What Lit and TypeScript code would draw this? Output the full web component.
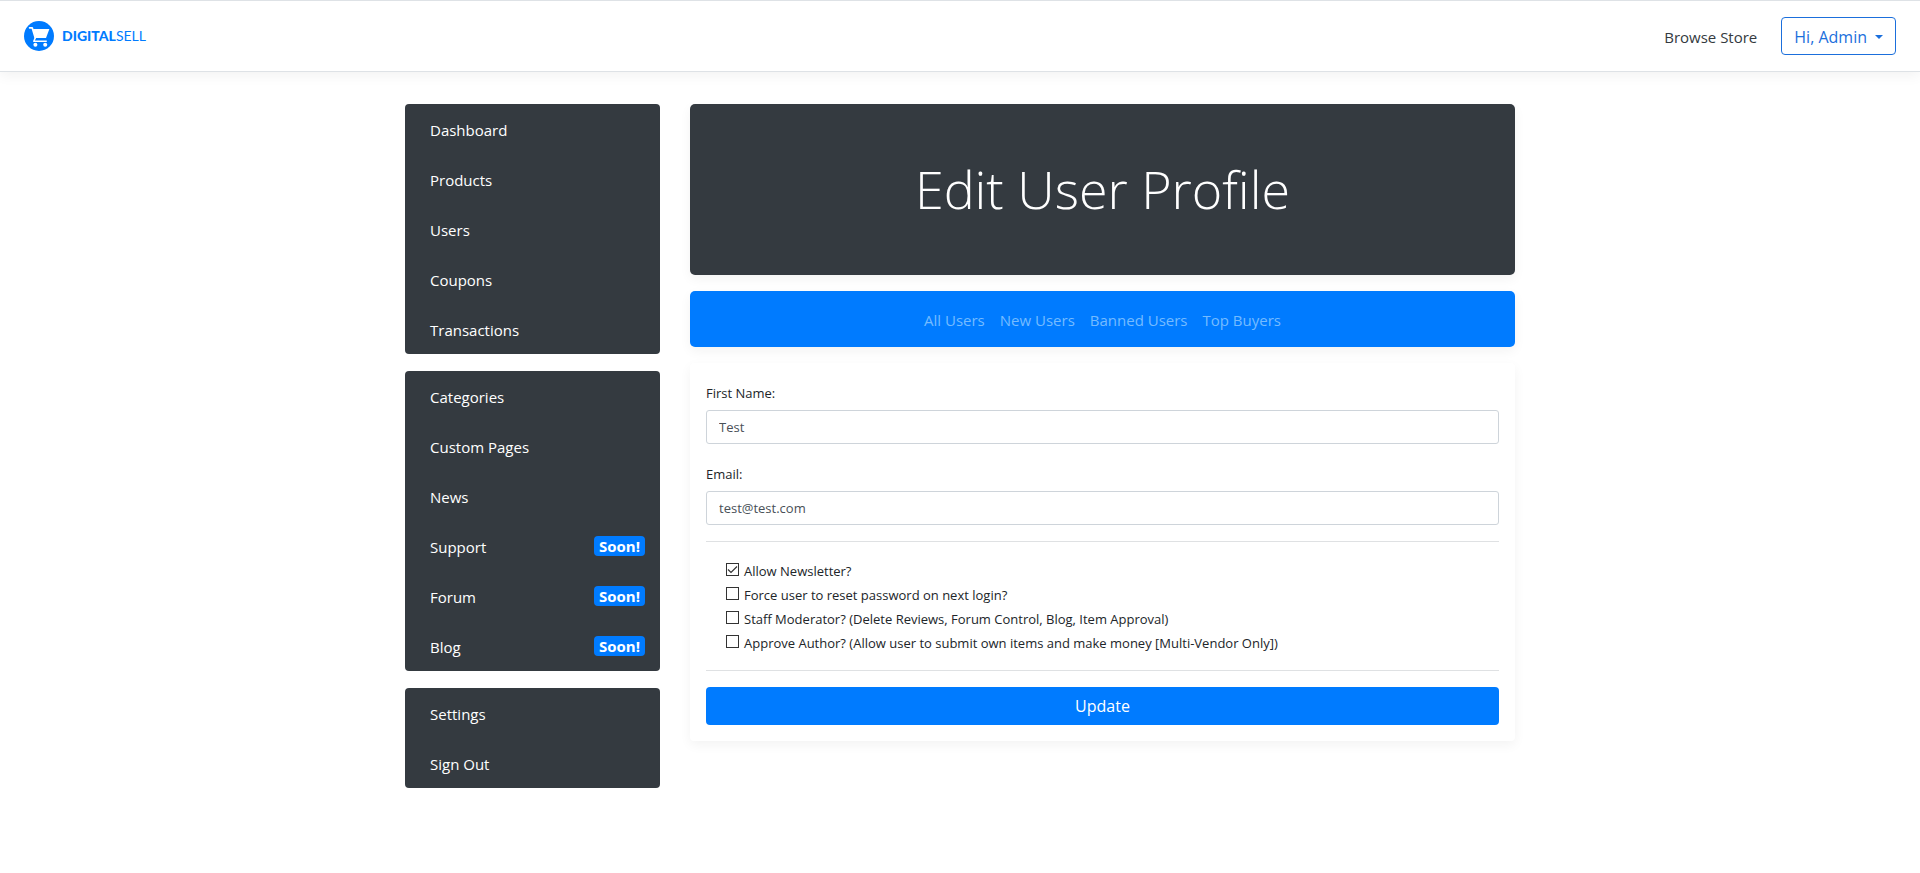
import { LitElement, html, css, nothing } from "lit";
import { customElement, property } from "lit/decorators.js";

interface MenuItem {
  label: string;
  soon?: boolean;
}

const MENU: MenuItem[][] = [
  [
    { label: "Dashboard" },
    { label: "Products" },
    { label: "Users" },
    { label: "Coupons" },
    { label: "Transactions" },
  ],
  [
    { label: "Categories" },
    { label: "Custom Pages" },
    { label: "News" },
    { label: "Support", soon: true },
    { label: "Forum", soon: true },
    { label: "Blog", soon: true },
  ],
  [{ label: "Settings" }, { label: "Sign Out" }],
];

const TABS = ["All Users", "New Users", "Banned Users", "Top Buyers"];

const OPTIONS = [
  { id: "newsletter", label: "Allow Newsletter?", checked: true },
  { id: "reset", label: "Force user to reset password on next login?", checked: false },
  {
    id: "staff",
    label: "Staff Moderator? (Delete Reviews, Forum Control, Blog, Item Approval)",
    checked: false,
  },
  {
    id: "author",
    label: "Approve Author? (Allow user to submit own items and make money [Multi-Vendor Only])",
    checked: false,
  },
];

@customElement("site-header")
class SiteHeader extends LitElement {
  static styles = css`
    :host {
      display: block;
    }
    .bar {
      display: flex;
      align-items: center;
      justify-content: space-between;
      box-sizing: border-box;
      padding: 16px 24px;
      background: #fff;
      border-top: 1px solid #dee2e6;
      border-bottom: 1px solid #dee2e6;
      box-shadow: 0 4px 12px rgba(0, 0, 0, 0.05);
    }
    .brand {
      display: flex;
      align-items: center;
      gap: 8px;
      color: #007bff;
      font: 400 14px/30px Lato, sans-serif;
      text-decoration: none;
    }
    .brand b {
      font-weight: 900;
    }
    .icon {
      display: block;
      width: 30px;
      height: 30px;
    }
    .actions {
      display: flex;
      align-items: center;
      gap: 24px;
    }
    .store {
      padding-top: 2px;
      color: #343a40;
      font-size: 15px;
      line-height: 24px;
      text-decoration: none;
    }
    .account {
      display: flex;
      align-items: center;
      gap: 8px;
      padding: 7px 12px 5px;
      color: #1b6fdc;
      background: #fff;
      border: 1px solid #1b6fdc;
      border-radius: 4px;
      font: 400 16px/24px "Open Sans", sans-serif;
    }
    .caret {
      border: 4px solid transparent;
      border-top-color: currentColor;
      border-bottom: 0;
    }
  `;

  render() {
    return html`
      <header class="bar">
        <a class="brand" href="#">
          <svg class="icon" viewBox="0 0 30 30" aria-hidden="true">
            <circle cx="15" cy="15" r="15" fill="#007bff" />
            <path
              d="M5.6 6.8h2.6l3 10"
              fill="none"
              stroke="#fff"
              stroke-width="1.7"
              stroke-linecap="round"
              stroke-linejoin="round"
            />
            <path d="M9 8h16.4L22 17H11.4z" fill="#fff" />
            <path
              d="M11.4 16.6l-1.6 3.6h13"
              fill="none"
              stroke="#fff"
              stroke-width="1.5"
              stroke-linejoin="round"
            />
            <circle cx="11.4" cy="23.8" r="2" fill="#fff" />
            <circle cx="21.2" cy="23.8" r="2" fill="#fff" />
          </svg>
          <span><b>DIGITAL</b>SELL</span>
        </a>
        <nav class="actions">
          <a class="store" href="#">Browse Store</a>
          <button class="account" type="button">Hi, Admin<span class="caret"></span></button>
        </nav>
      </header>
    `;
  }
}

@customElement("side-menu")
class SideMenu extends LitElement {
  @property({ attribute: false }) groups: MenuItem[][] = [];

  static styles = css`
    :host {
      display: block;
    }
    .menu {
      display: flex;
      flex-direction: column;
      gap: 17px;
    }
    .group {
      margin: 0;
      padding: 0;
      list-style: none;
      background: #343a40;
      border-radius: 4px;
    }
    .link {
      display: flex;
      align-items: center;
      justify-content: space-between;
      padding: 14px 15px 12px 25px;
      color: #fff;
      font-size: 15px;
      line-height: 24px;
      text-decoration: none;
    }
    .badge {
      margin: -2px 0 0;
      padding: 1px 5px;
      border-radius: 4px;
      background: #007bff;
      font-weight: 700;
      line-height: 18px;
    }
  `;

  render() {
    return html`
      <nav class="menu">
        ${this.groups.map(
          (group) => html`
            <ul class="group">
              ${group.map(
                (item) => html`
                  <li>
                    <a class="link" href="#"
                      >${item.label}${item.soon ? html`<span class="badge">Soon!</span>` : nothing}</a
                    >
                  </li>
                `
              )}
            </ul>
          `
        )}
      </nav>
    `;
  }
}

@customElement("profile-form")
class ProfileForm extends LitElement {
  static styles = css`
    :host {
      display: block;
    }
    .card {
      padding: 16px;
      color: #212529;
      background: #fff;
      border-radius: 4px;
      box-shadow: 0 4px 12px rgba(0, 0, 0, 0.05);
      font-size: 13px;
      line-height: 24px;
    }
    .field {
      display: flex;
      flex-direction: column;
      gap: 7px;
      margin-bottom: 16px;
    }
    .label {
      padding-top: 4px;
      line-height: 20px;
    }
    .input {
      box-sizing: border-box;
      width: 100%;
      height: 34px;
      padding: 6px 12px;
      color: #495057;
      background: #fff;
      border: 1px solid #ced4da;
      border-radius: 3px;
      font: inherit;
      line-height: 20px;
    }
    .options {
      margin: 0;
      padding: 16px 20px;
      list-style: none;
      border: solid #dfe1e3;
      border-width: 1px 0;
    }
    .option {
      display: flex;
      align-items: center;
      gap: 5px;
    }
    .option label {
      padding-top: 2px;
      line-height: 22px;
    }
    .check {
      appearance: none;
      box-sizing: border-box;
      width: 13px;
      height: 13px;
      margin: 0 0 2px;
      background: #fff;
      border: 1px solid #333;
    }
    .check:checked {
      background: #fff
        url("data:image/svg+xml,%3Csvg xmlns='http://www.w3.org/2000/svg' viewBox='0 0 11 11'%3E%3Cpath d='M1 5.5l3 3 6-6' fill='none' stroke='%23333' stroke-width='1.2'/%3E%3C/svg%3E")
        center / 11px 11px no-repeat;
    }
    .submit {
      display: block;
      width: 100%;
      margin-top: 16px;
      padding: 7px 12px;
      color: #fff;
      background: #007bff;
      border: 0;
      border-radius: 4px;
      font: 400 16px/24px "Open Sans", sans-serif;
    }
  `;

  render() {
    return html`
      <form class="card">
        <div class="field">
          <label class="label" for="first-name">First Name:</label>
          <input class="input" id="first-name" type="text" value="Test" />
        </div>
        <div class="field">
          <label class="label" for="email">Email:</label>
          <input class="input" id="email" type="email" value="test@test.com" />
        </div>
        <ul class="options">
          ${OPTIONS.map(
            (o) => html`
              <li class="option">
                <input class="check" type="checkbox" id=${o.id} ?checked=${o.checked} />
                <label for=${o.id}>${o.label}</label>
              </li>
            `
          )}
        </ul>
        <button class="submit" type="button">Update</button>
      </form>
    `;
  }
}

@customElement("app-root")
class AppRoot extends LitElement {
  static styles = css`
    :host {
      display: block;
      min-height: 100vh;
      background: #fff;
      color: #212529;
      font-family: "Open Sans", sans-serif;
    }
    .page {
      display: grid;
      grid-template-columns: minmax(0, 255fr) minmax(0, 825fr);
      gap: 30px;
      box-sizing: border-box;
      max-width: 1140px;
      margin: 32px auto;
      padding: 0 15px;
    }
    .content {
      display: flex;
      flex-direction: column;
      gap: 16px;
    }
    .hero {
      padding: 51px 32px 53px;
      color: #fff;
      background: #343a40;
      border-radius: 5px;
      box-shadow: 0 4px 12px rgba(0, 0, 0, 0.05);
      text-align: center;
    }
    .title {
      margin: 0;
      font-size: 52px;
      font-weight: 300;
      line-height: 67px;
    }
    .tabs {
      display: flex;
      flex-wrap: wrap;
      justify-content: center;
      gap: 0 15px;
      padding: 17px 16px 15px;
      background: #007bff;
      border-radius: 5px;
      box-shadow: 0 4px 12px rgba(0, 0, 0, 0.05);
    }
    .tab {
      color: #75bbff;
      font-size: 15px;
      line-height: 24px;
      text-decoration: none;
    }
  `;

  render() {
    return html`
      <site-header></site-header>
      <div class="page">
        <side-menu .groups=${MENU}></side-menu>
        <main class="content">
          <div class="hero"><h1 class="title">Edit User Profile</h1></div>
          <nav class="tabs">${TABS.map((t) => html`<a class="tab" href="#">${t}</a>`)}</nav>
          <profile-form></profile-form>
        </main>
      </div>
    `;
  }
}
